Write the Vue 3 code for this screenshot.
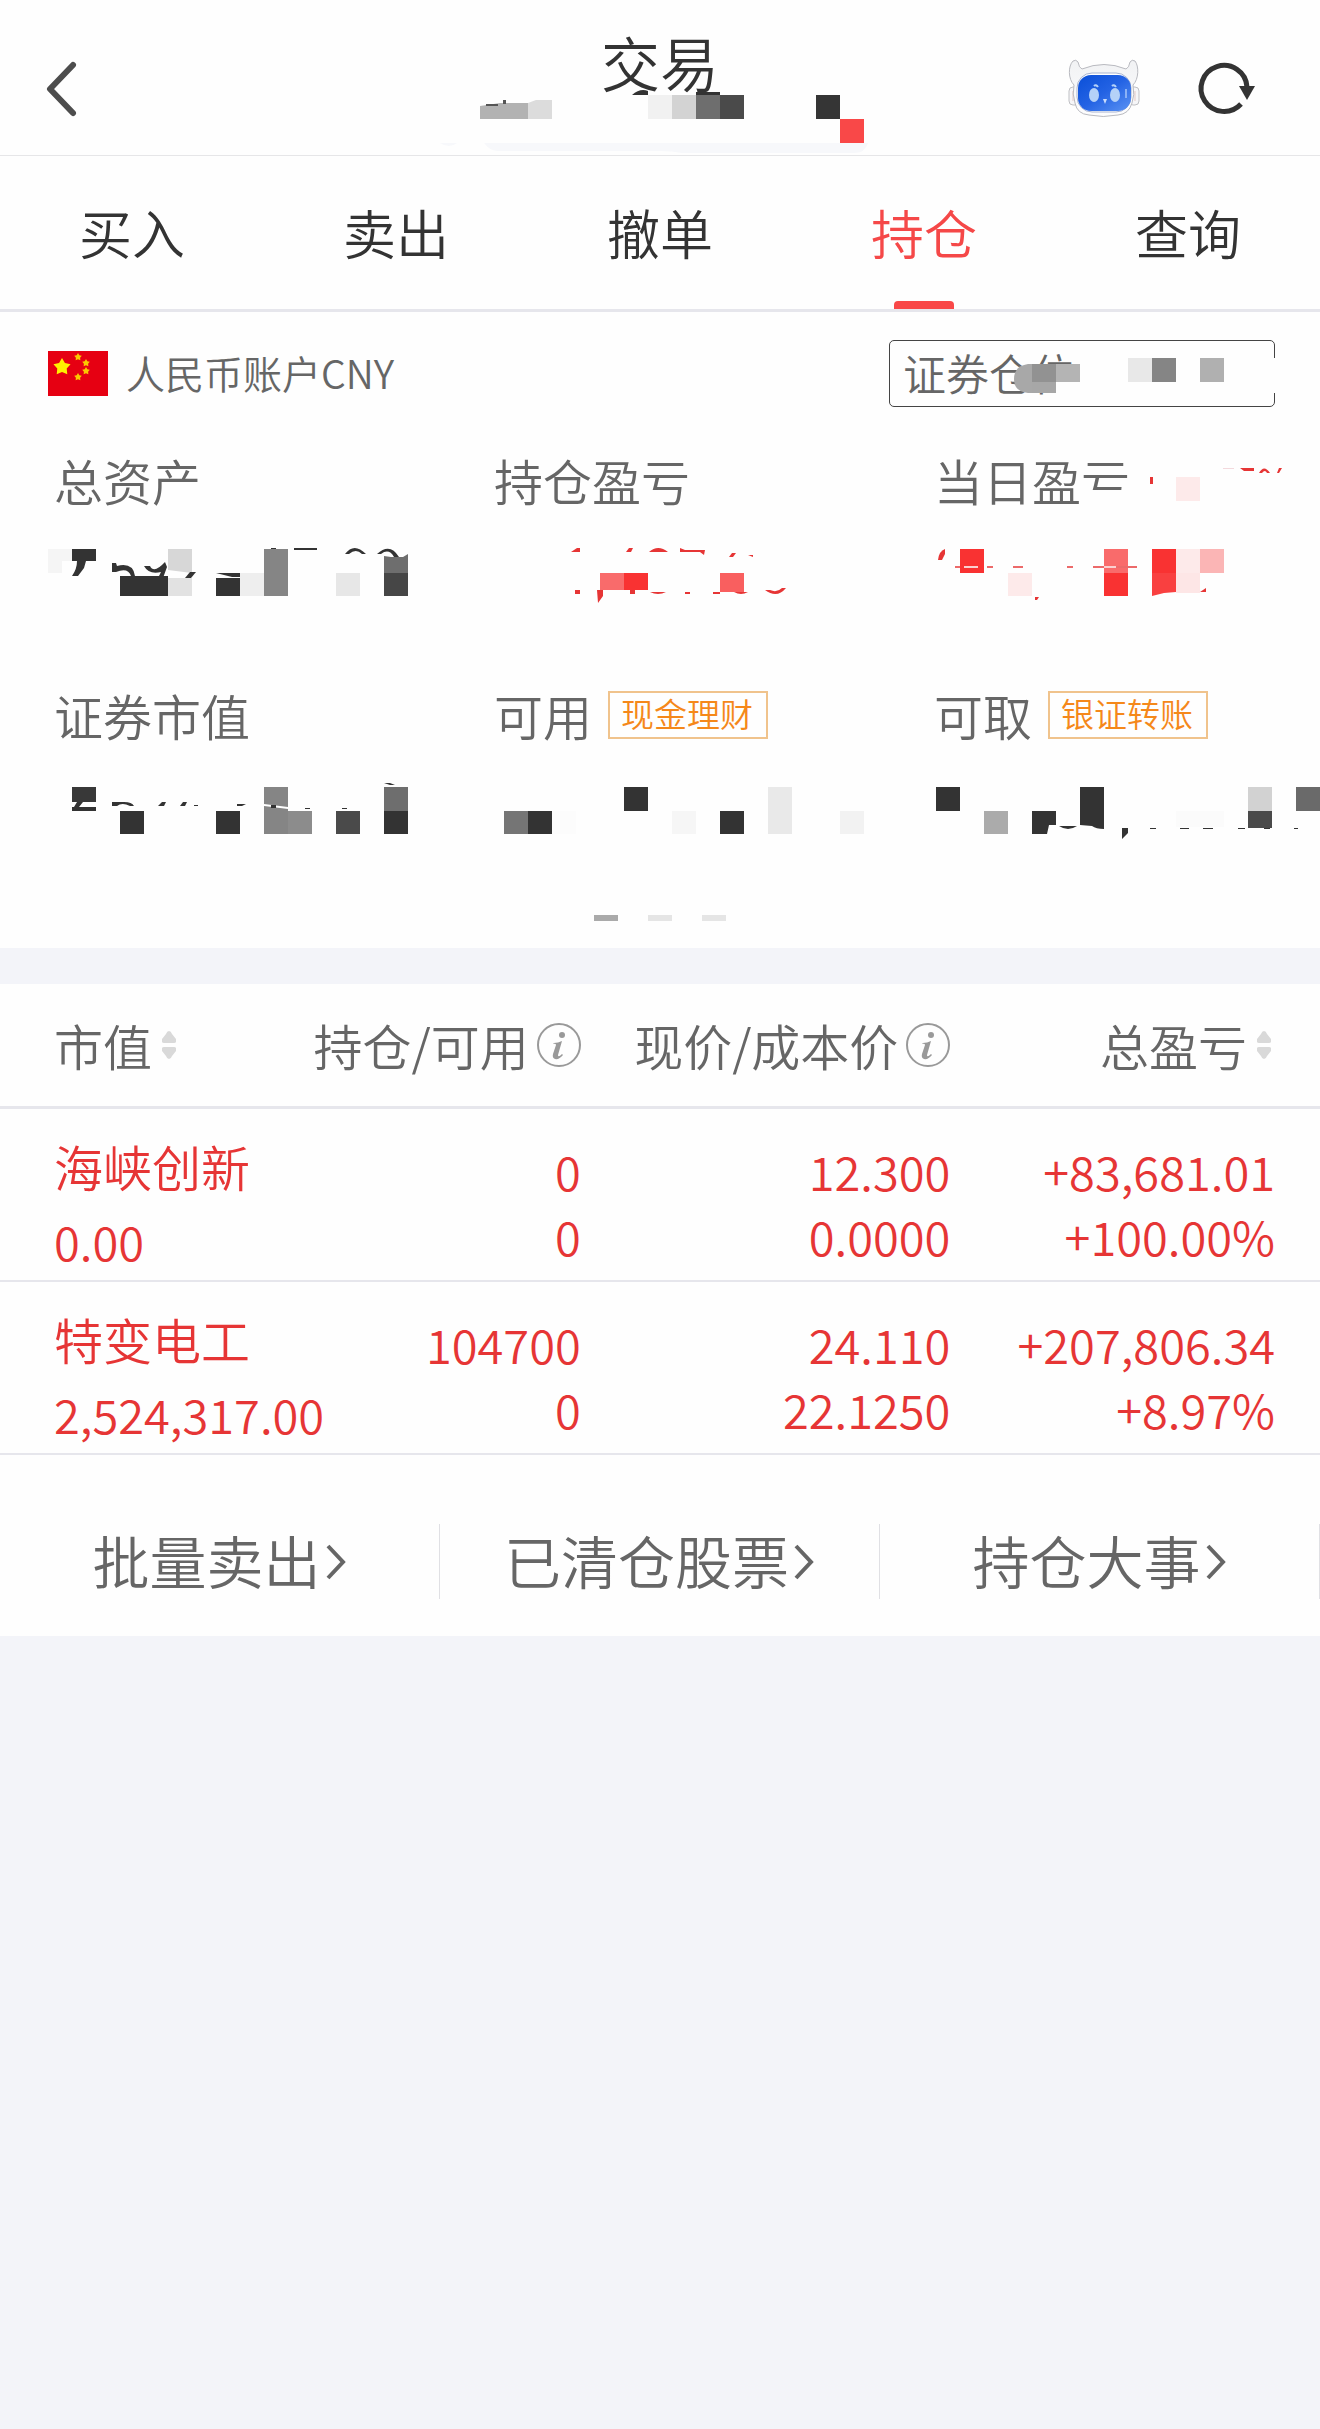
<template>
  <div class="page">
    <header class="header">
      <button class="icon-btn back" aria-label="返回">
        <svg width="40" height="60" viewBox="0 0 40 60">
          <path d="M31 6L8 30L31 54" fill="none" stroke="#4d4d4d" stroke-width="6" stroke-linecap="round" stroke-linejoin="round" />
        </svg>
      </button>
      <div class="title">
        <h1>交易</h1>
        <svg class="cover title-cover" width="456" height="64" viewBox="0 0 456 64" aria-hidden="true">
          <path v-for="(p, i) in titleMask" :key="i" :d="p[0]" :fill="p[1]" />
        </svg>
      </div>
      <div class="tools">
        <button class="icon-btn" aria-label="智能助手">
          <svg width="72" height="60" viewBox="0 0 72 60">
            <defs>
              <linearGradient id="shell" x1="0" y1="0" x2="0" y2="1">
                <stop offset="0" stop-color="#f1f2f4" />
                <stop offset="1" stop-color="#fdfdfe" />
              </linearGradient>
              <linearGradient id="face" x1="0" y1="0" x2="1" y2="1">
                <stop offset="0" stop-color="#0a4fd8" />
                <stop offset="0.5" stop-color="#2463e4" />
                <stop offset="1" stop-color="#5b93f3" />
              </linearGradient>
            </defs>
            <rect x="1" y="28" width="10" height="18" rx="4" fill="#f6f6f8" stroke="#bfc0c4" />
            <rect x="61" y="28" width="10" height="18" rx="4" fill="#f6f6f8" stroke="#bfc0c4" />
            <path d="M5 32v10M67 32v10" stroke="#e3c9c6" />
            <path d="M6 26C0 20 0 7 5 2q3-2 5 1q1 6 4 7q22-9 44 0q3-1 4-7q2-3 5-1c4 5 4 18-2 24q2 10-1 18q-3 11-14 12q-15 3-29 0Q9 55 7 44Q4 35 6 26Z" fill="url(#shell)" stroke="#b9bac0" />
            <rect x="9" y="14" width="54" height="39" rx="15" fill="#fff" stroke="#a9b4d0" />
            <rect x="10" y="16" width="53" height="36" rx="13" fill="url(#face)" />
            <ellipse cx="26" cy="36" rx="5" ry="7" fill="#b5d2f8" />
            <ellipse cx="47" cy="36" rx="5" ry="7" fill="#b5d2f8" />
            <path d="M26 27q2-2 4 1M44 27q2-2 4 1" fill="none" stroke="#b5d2f8" stroke-width="2" />
            <path d="M35 40h4l-2 5z" fill="#c9dcfb" />
            <path d="M58 30v9" stroke="#8bb2f6" stroke-width="2" />
          </svg>
        </button>
        <button class="icon-btn" aria-label="刷新">
          <svg width="60" height="60" viewBox="0 0 60 60">
            <path d="M46 45A23 23 0 1 1 52 28" fill="none" stroke="#333" stroke-width="5" />
            <path d="M44 27h16l-8 14z" fill="#333" />
          </svg>
        </button>
      </div>
    </header>

    <nav class="tabs">
      <a v-for="tab in tabs" :key="tab" href="#" :class="{ active: tab === current }" @click.prevent="current = tab">{{ tab }}</a>
    </nav>

    <section class="account">
      <div class="account-row">
        <svg width="60" height="45" viewBox="0 0 60 45" aria-hidden="true">
          <rect width="60" height="45" fill="#e60012" />
          <path :d="star(14, 16, 9)" fill="#fff100" />
          <path v-for="s in smallStars" :key="s.join()" :d="star(s[0], s[1], 4)" fill="#fbc800" />
        </svg>
        <span class="account-name">人民币账户CNY</span>
        <button class="position">
          证券仓位
          <svg class="cover position-cover" width="388" height="66" viewBox="0 0 388 66" aria-hidden="true">
            <path v-for="(p, i) in positionMask" :key="i" :d="p[0]" :fill="p[1]" />
          </svg>
        </button>
      </div>

      <div class="stats">
        <div v-for="item in stats" :key="item.label" class="stat">
          <div class="stat-label">
            {{ item.label }}
            <button v-if="item.tag" class="tag">{{ item.tag }}</button>
            <svg v-if="item.labelMask" class="cover label-cover" width="440" height="60" viewBox="0 0 440 60" aria-hidden="true">
              <path v-for="(p, i) in item.labelMask" :key="i" :d="p[0]" :fill="p[1]" />
            </svg>
          </div>
          <svg class="stat-value" width="440" height="72" viewBox="0 0 440 72" aria-hidden="true">
            <path v-for="(p, i) in item.mask" :key="i" :d="p[0]" :fill="p[1]" />
          </svg>
        </div>
      </div>

      <div class="pager"><i v-for="n in 3" :key="n" :class="{ on: n === 1 }"></i></div>
    </section>

    <table class="holdings">
      <thead>
        <tr>
          <th v-for="col in columns" :key="col.text">
            <div class="th">
              <span>{{ col.text }}</span>
              <svg v-if="col.sort" class="sort" width="14" height="28" viewBox="0 0 14 28">
                <path d="M7 0q2 0 3 3l4 5q1 4-2 4H2q-3 0-2-4l4-5q1-3 3-3zM7 28q2 0 3-3l4-5q1-4-2-4H2q-3 0-2 4l4 5q1 3 3 3z" fill="#d9d9d9" />
              </svg>
              <svg v-else class="info" width="44" height="44" viewBox="0 0 44 44">
                <circle cx="22" cy="22" r="21" fill="none" stroke="#999" stroke-width="2" />
                <circle cx="25" cy="12" r="3" fill="#999" />
                <path d="M17 20q4 0 8-2l-4 14q0 3 4-1l1 1q-4 5-8 4q-3-1-2-5l3-9q0-2-3-1z" fill="#999" />
              </svg>
            </div>
          </th>
        </tr>
      </thead>
      <tbody>
        <tr v-for="row in rows" :key="row[0][0]">
          <td v-for="(cell, i) in row" :key="i">
            <div v-for="(line, j) in cell" :key="j">{{ line }}</div>
          </td>
        </tr>
      </tbody>
    </table>

    <footer class="links">
      <a v-for="link in links" :key="link" href="#">
        <span>{{ link }}</span>
        <svg width="22" height="36" viewBox="0 0 22 36">
          <path d="M3 2L18 18L3 34" fill="none" stroke="#666" stroke-width="4" />
        </svg>
      </a>
    </footer>
  </div>
</template>

<script setup>
import { ref } from 'vue'

const tabs = ['买入', '卖出', '撤单', '持仓', '查询']
const current = ref('持仓')
const links = ['批量卖出', '已清仓股票', '持仓大事']

const columns = [
  { text: '市值', sort: true },
  { text: '持仓/可用' },
  { text: '现价/成本价' },
  { text: '总盈亏', sort: true },
]
const rows = [
  [['海峡创新', '0.00'], ['0', '0'], ['12.300', '0.0000'], ['+83,681.01', '+100.00%']],
  [['特变电工', '2,524,317.00'], ['104700', '0'], ['24.110', '22.1250'], ['+207,806.34', '+8.97%']],
]

const smallStars = [[30, 6], [38, 12], [38, 20], [30, 26]]
// 五角星
function star(cx, cy, r) {
  let d = ''
  for (let i = 0; i < 10; i++) {
    const a = (Math.PI / 5) * i - Math.PI / 2
    const k = i % 2 ? r * 0.55 : r
    d += `${i ? 'L' : 'M'}${(cx + k * Math.cos(a)).toFixed(2)} ${(cy + k * Math.sin(a)).toFixed(2)}`
  }
  return d + 'Z'
}

// 隐私遮挡用的马赛克块
const box = (x, y, w, h, color) => [`M${x} ${y}h${w}v${h}h${-w}z`, color]
const DARK = '#333'
const RED = '#e63535'
const HOT = '#f93232'

const titleMask = [
  box(180, 9, 60, 30, '#fefefe'),
  ['M200 6q8-7 16-4v4z', DARK],
  box(264, 3, 24, 3, DARK),
  ['M48 17l20-3h28v16h-48z', '#b2b2b2'],
  ['M54 15h12v2h-12zM71 11h3v4h-3z', '#555'],
  ['M96 14l8-3h16v19h-24z', '#dcdcdc'],
  box(216, 6, 24, 24, '#f1f1f1'),
  box(240, 6, 24, 24, '#d3d3d3'),
  box(264, 6, 24, 24, '#6e6e6e'),
  box(288, 6, 24, 24, '#4a4a4a'),
  box(384, 6, 24, 24, '#353535'),
  box(408, 30, 24, 24, '#f94848'),
  ['M8 54h17q-8 6-17 0z', '#f7f8fb'],
  ['M52 54h384q-3 10-14 10H250q-10-2-22-2H66q-8 0-14-8z', '#f7f8fb'],
]

const positionMask = [
  box(167, 24, 26, 32, '#fefefe'),
  ['M143 24h-4q-14 2-14 15q0 13 14 14h4z', '#a8a8a8'],
  box(143, 24, 24, 18, '#929292'),
  box(143, 42, 24, 11, '#a7a7a7'),
  box(167, 24, 24, 18, '#b4b4b4'),
  box(239, 18, 24, 24, '#e8e8e8'),
  box(263, 18, 24, 24, '#858585'),
  box(311, 18, 24, 24, '#b0b0b0'),
  box(382, 18, 6, 35, '#fefefe'),
]

const stats = [
  {
    label: '总资产',
    mask: [
      box(48, 14, 24, 12, '#f5f5f5'),
      box(48, 26, 14, 12, '#f5f5f5'),
      box(72, 14, 24, 12, DARK),
      ['M77 26h9l-2 7-6 8h-6q5-7 5-15z', DARK],
      ['M112 28h4l1 3q16-4 18 10h-4q-3-9-15-4h-4z', DARK],
      ['M144 31h6q4 8 15-4l2 5-4 11h-5l3-6q-12 3-17-6z', DARK],
      ['M168 14h24v24l-24-3z', '#d7d7d7'],
      box(120, 41, 48, 20, DARK),
      box(168, 43, 24, 18, '#e2e2e2'),
      ['M190 37h6l-5 6h-6z', DARK],
      ['M216 38h24v4h-8z', DARK],
      box(216, 43, 24, 18, DARK),
      box(240, 38, 24, 23, '#eee'),
      box(264, 14, 24, 47, '#858585'),
      box(271, 13, 5, 1, DARK),
      box(294, 13, 23, 2, DARK),
      ['M345 19q9-12 21 0h-4q-6-6-13 0z', DARK],
      ['M377 19q13-12 22 3h-5q-5-9-13-3z', DARK],
      box(336, 38, 24, 23, '#e7e7e7'),
      ['M384 21l7 1h12l5-3v19h-24z', '#6e6e6e'],
      box(384, 38, 24, 23, '#464646'),
    ],
  },
  {
    label: '持仓盈亏',
    mask: [
      ['M131 17l6-4h3v4zM186 17l3-4h4l-2 4zM209 17q9-8 19 0z', RED],
      ['M240 13l5 2h20l-1 5-4-3h-20zM289 22l3-4h4l-3 4zM308 20h5v2z', RED],
      box(160, 38, 24, 17, '#f96b6b'),
      box(184, 38, 24, 17, HOT),
      box(280, 38, 24, 19, '#f95f5f'),
      ['M135 55h5v4h-5zM157 55h6v6l-5 7zM190 55h5v4h-5z', RED],
      ['M210 57h16q-8 4-16 0zM245 57h5v2h-5zM273 57h7v2h-7zM294 57h14q-7 4-14 0z', RED],
      ['M325 55h5q7 3 12-2h4q-9 11-21 2z', RED],
    ],
  },
  {
    label: '当日盈亏',
    labelMask: [
      box(202, 38, 56, 22, '#fefefe'),
      ['M270 25h3v7h-3zM360 16h14v3h-10zM379 21q5-9 11 0h-3q-2-4-5 0zM397 21l2-5h3l-3 5z', RED],
      box(343, 16, 11, 1, '#f3d9dd'),
      box(296, 25, 24, 24, '#fdeaea'),
    ],
    mask: [
      ['M58 25q1-9 7-11v5l-3 6z', RED],
      box(80, 14, 24, 24, HOT),
      box(128, 38, 24, 23, '#fdeaea'),
      box(224, 14, 24, 24, '#f96b6b'),
      box(224, 38, 24, 23, HOT),
      box(272, 14, 24, 24, HOT),
      ['M272 38h24v19l-12 1-12 3z', '#f94040'],
      box(296, 14, 24, 24, '#fdeaea'),
      box(296, 38, 24, 20, '#fde6e6'),
      box(320, 14, 24, 24, '#fbb5b5'),
      box(84, 31, 14, 2, '#fbd0d0'),
      box(224, 31, 12, 2, '#fbd0d0'),
      ['M75 31h5v2h-5zM107 31h6v2h-6zM133 31h10v2h-10zM187 31h6v2h-6zM213 31h11v2h-11zM236 31h21v2h-21z', '#ec6a6a'],
      ['M320 57l6-4v4zM155 65v-3h4l-2 3z', RED],
    ],
  },
  {
    label: '证券市值',
    mask: [
      box(72, 17, 24, 15, '#383838'),
      box(72, 37, 24, 4, DARK),
      ['M77 32h6l-4 5h-5zM112 32h12q8 0 10 4h-4q-8-4-13 0h-5z', DARK],
      ['M158 36l4-4h4l-2 4zM180 36l3-4h4l-2 4zM194 35h4v1h-4zM237 34h9l-4 2h-5z', DARK],
      box(120, 41, 24, 23, DARK),
      box(216, 41, 24, 23, DARK),
      box(264, 17, 24, 47, '#858585'),
      ['M264 34l24 3v2l-24-3z', '#fff'],
      box(271, 35, 5, 3, DARK),
      box(288, 41, 24, 23, '#8c8c8c'),
      ['M305 38h5v1h-5zM342 38h5v1h-5zM384 13h6l5 2h-5z', DARK],
      box(336, 41, 24, 23, '#4a4a4a'),
      box(384, 17, 24, 24, '#6e6e6e'),
      box(384, 41, 24, 23, DARK),
    ],
  },
  {
    label: '可用',
    tag: '现金理财',
    mask: [
      box(64, 41, 24, 23, '#757575'),
      box(88, 41, 24, 23, DARK),
      box(112, 41, 24, 23, '#fcfcfc'),
      box(184, 17, 24, 24, DARK),
      box(232, 41, 24, 23, '#f6f6f6'),
      box(280, 41, 24, 23, DARK),
      box(328, 17, 24, 47, '#e9e9e9'),
      box(400, 41, 24, 23, '#f2f2f2'),
    ],
  },
  {
    label: '可取',
    tag: '银证转账',
    mask: [
      box(56, 17, 24, 24, DARK),
      box(104, 41, 24, 23, '#ababab'),
      ['M152 41h24v14h-7l-2 9h-15z', DARK],
      ['M179 56h18q-9 6-18 0z', DARK],
      ['M200 17h24v42q-8 0-12-3l-12-1z', DARK],
      ['M242 58h6v5l-6 6zM270 58h6v1h-6zM300 58h9v1h-9zM323 58h10v1h-10zM358 58h7v1h-7zM384 58h6v1h-6zM414 58h4v1h-4z', DARK],
      box(296, 41, 48, 16, '#fbfbfb'),
      box(368, 17, 24, 24, '#d2d2d2'),
      box(368, 41, 24, 17, '#4a4a4a'),
      box(416, 17, 24, 24, '#6a6a6a'),
    ],
  },
]
</script>

<style>
body {
  margin: 0;
  background: #f3f4f9;
}
</style>

<style scoped>
.page {
  font-family: 'Noto Sans CJK SC', sans-serif;
  font-weight: 350;
  color: #333;
  overflow-x: hidden;
}
button {
  font: inherit;
  color: inherit;
  background: none;
  border: 0;
  padding: 0;
}
a {
  color: inherit;
  text-decoration: none;
}
svg {
  display: block;
  flex-shrink: 0;
}
.cover {
  position: absolute;
  pointer-events: none;
}
.header {
  display: grid;
  grid-template-columns: 1fr auto 1fr;
  align-items: center;
  box-sizing: border-box;
  height: 156px;
  padding: 22px 65px 0 42px;
  background: #fefefe;
  border-bottom: 1px solid #e6e6e8;
}
.title {
  position: relative;
  align-self: start;
  margin-left: 23px;
}
.title h1 {
  margin: 0;
  font-size: 59px;
  font-weight: inherit;
  line-height: 80px;
}
.title-cover {
  left: 50%;
  top: 67px;
  margin-left: -228px;
}
.tools {
  display: flex;
  justify-content: flex-end;
  gap: 55px;
}
.back {
  justify-self: start;
}
.tabs {
  display: flex;
  background: #fefefe;
  border-bottom: 3px solid #e6e6ec;
}
.tabs a {
  position: relative;
  flex: 1;
  text-align: center;
  font-size: 53px;
  line-height: 153px;
}
.tabs .active {
  color: #f54848;
}
.tabs .active::after {
  content: '';
  position: absolute;
  left: 50%;
  bottom: 0;
  width: 60px;
  height: 8px;
  margin-left: -30px;
  border-radius: 4px 4px 0 0;
  background: #f94848;
}
.account {
  background: #fefefe;
  color: #666;
  padding: 28px 0 27px;
}
.account-row {
  display: flex;
  align-items: center;
  padding: 0 45px 0 48px;
  font-size: 39px;
  line-height: 56px;
}
.account-name {
  flex: 1;
  margin-left: 18px;
  padding-bottom: 4px;
}
.position {
  position: relative;
  box-sizing: border-box;
  width: 386px;
  height: 67px;
  padding: 0 0 2px 13px;
  border: 1px solid #444;
  border-radius: 5px;
  font-size: 43px;
  line-height: 63px;
  text-align: left;
}
.position-cover {
  left: -1px;
  top: -1px;
}
.stats {
  display: grid;
  grid-template-columns: repeat(3, 1fr);
  row-gap: 80px;
  margin-top: 45px;
}
.stat {
  min-width: 0;
}
.stat-label {
  position: relative;
  display: flex;
  align-items: center;
  gap: 16px;
  box-sizing: border-box;
  height: 60px;
  padding: 0 0 4px 54px;
  font-size: 49px;
  line-height: 56px;
  white-space: nowrap;
}
.label-cover {
  left: 0;
  top: 0;
}
.tag {
  box-sizing: border-box;
  height: 48px;
  padding: 0 13px 4px 11px;
  border: 2px solid #f0c38c;
  color: #f5881a;
  font-size: 33px;
  line-height: 40px;
}
.stat-value {
  margin-top: 23px;
}
.pager {
  display: flex;
  justify-content: center;
  gap: 30px;
  margin-top: 73px;
}
.pager i {
  width: 24px;
  height: 6px;
  background: #e5e5e5;
}
.pager .on {
  background: #aaa;
}
.holdings {
  width: 100%;
  margin-top: 36px;
  table-layout: fixed;
  border-collapse: separate;
  border-spacing: 0;
  background: #fefefe;
  white-space: nowrap;
}
.holdings th {
  height: 122px;
  padding: 0;
  border-bottom: 3px solid #e6e6ec;
  color: #666;
  font-size: 49px;
  font-weight: inherit;
}
.th {
  display: flex;
  align-items: center;
  justify-content: flex-end;
  line-height: 60px;
}
.sort {
  margin-left: 10px;
}
.info {
  margin-left: 8px;
}
.holdings th:first-child,
.holdings td:first-child {
  width: 23%;
  padding-left: 54px;
  box-sizing: border-box;
  text-align: left;
}
.holdings th:first-child .th {
  justify-content: flex-start;
}
.holdings th:nth-child(2) {
  width: 21%;
}
.holdings th:nth-child(3) {
  width: 28%;
}
.holdings th:last-child {
  padding-right: 49px;
}
.holdings td:last-child {
  padding-right: 45px;
}
.holdings td {
  box-sizing: border-box;
  height: 173px;
  padding: 17px 0 0;
  border-bottom: 2px solid #e6e6ec;
  color: #e63535;
  font-size: 47px;
  line-height: 65px;
  text-align: right;
}
.holdings td:first-child {
  line-height: 75px;
}
.holdings td:first-child div:first-child {
  font-size: 49px;
}
.links {
  display: flex;
  padding: 69px 0 37px;
  background: #fefefe;
  color: #666;
}
.links a {
  box-sizing: border-box;
  flex: 1;
  display: flex;
  align-items: center;
  justify-content: center;
  gap: 4px;
  height: 75px;
  border-right: 1px solid #e0e0e4;
  font-size: 57px;
  line-height: 63px;
}
.links span {
  margin-bottom: 4px;
}
</style>
